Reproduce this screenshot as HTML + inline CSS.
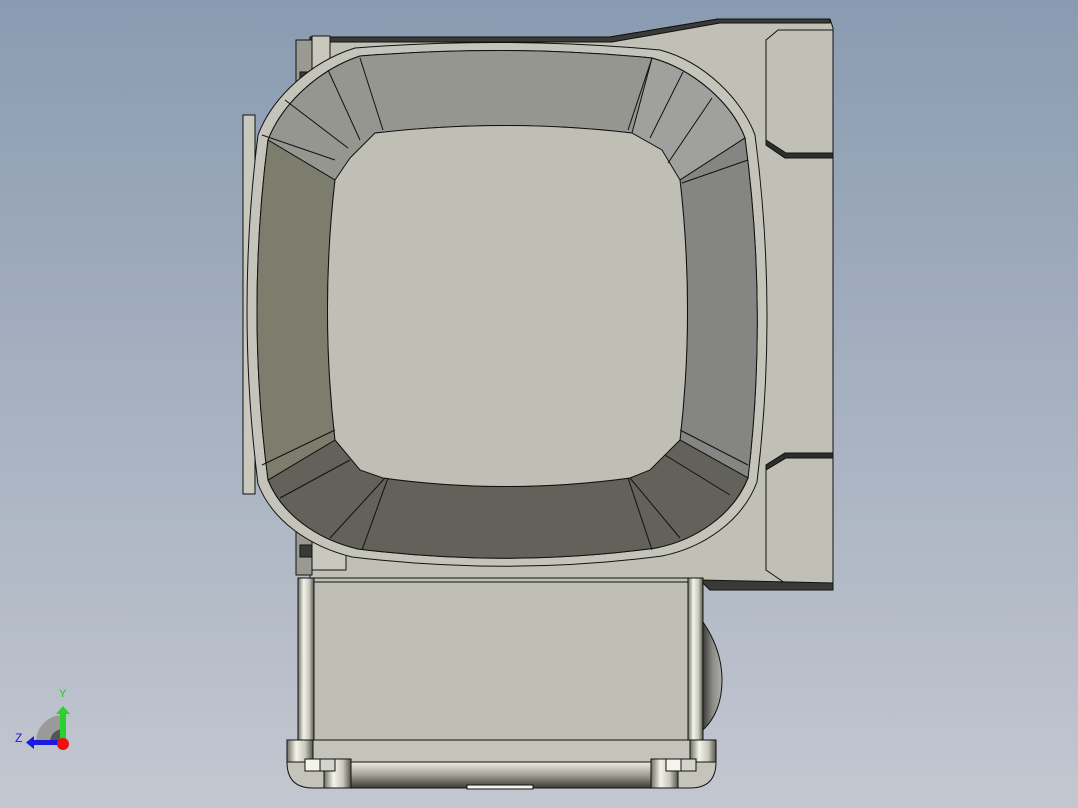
<!DOCTYPE html>
<html><head><style>
html,body{margin:0;padding:0;width:1078px;height:808px;overflow:hidden}
body{background:linear-gradient(#8a9bb1,#c3c7d0)}
svg{position:absolute;left:0;top:0}
</style></head><body>
<svg width="1078" height="808" viewBox="0 0 1078 808" xmlns="http://www.w3.org/2000/svg">
<defs>
<linearGradient id="post" x1="0" x2="1"><stop offset="0" stop-color="#6e6e64"/><stop offset="0.35" stop-color="#f4f4ea"/><stop offset="0.7" stop-color="#c8c8bc"/><stop offset="1" stop-color="#55554c"/></linearGradient>
<linearGradient id="strip" x1="0" y1="0" x2="0" y2="1"><stop offset="0" stop-color="#eeeee4"/><stop offset="0.5" stop-color="#a0a096"/><stop offset="1" stop-color="#3a3a34"/></linearGradient>
<linearGradient id="knob" x1="0" x2="1"><stop offset="0" stop-color="#3a3a36"/><stop offset="0.5" stop-color="#8a8a86"/><stop offset="1" stop-color="#b0b0ac"/></linearGradient>
</defs>
<g stroke="#111" stroke-width="1">
<path d="M310,37 L610,37 L718,19 L830,19 L833,28 L833,590 L710,590 L700,580 L345,580 L310,580 Z" fill="#c0c0b6"/>
<path d="M310,37 L610,37 L718,19 L830,19 L830,23 L720,23 L612,42 L310,42 Z" fill="#3a3a36"/>
<path d="M778,30 L833,30 L833,158 L785,158 L766,145 L766,40 Z" fill="#c0c0b6"/>
<path d="M766,145 L785,158 L833,158 L833,153 L786,153 L766,140Z" fill="#2e2e2a"/>
<path d="M766,465 L785,453 L833,453 L833,583 L785,583 L766,570 Z" fill="#c0c0b6"/>
<path d="M766,465 L785,453 L833,453 L833,458 L786,458 L766,470Z" fill="#2e2e2a"/>
<path d="M700,580 L833,583 L833,590 L710,590 Z" fill="#3a3a36"/>
<rect x="243" y="115" width="12" height="379" fill="#c8c8bd"/>
<rect x="296" y="40" width="16" height="52" fill="#9a9a92"/>
<rect x="300" y="72" width="12" height="12" fill="#3a3a36"/>
<rect x="312" y="36" width="18" height="40" fill="#c8c8be"/>
<rect x="296" y="520" width="16" height="55" fill="#9a9a92"/>
<rect x="300" y="545" width="12" height="12" fill="#3a3a36"/>
<rect x="312" y="540" width="34" height="30" fill="#c8c8be"/>
<!-- outer ring -->
<path d="M355,48 Q510,36 660,50 C705,62 742,100 755,135 Q778,310 757,482 C742,522 702,548 662,556 Q510,576 352,557 C308,546 272,520 258,484 Q236,310 258,135 C272,98 310,62 355,48 Z" fill="#c4c4ba"/>
<path d="M360,56 Q510,44 652,58 C695,70 732,104 745,138 Q768,310 748,478 C733,515 696,540 656,548 Q510,568 358,549 C316,539 282,514 268,480 Q246,310 268,140 C282,104 318,70 360,56 Z" fill="#8a8a80"/>
<path d="M360,56 Q510,44 652,58 C695,70 732,104 745,138 L680,180 L632,133 Q505,118 375,133 L335,180 L268,140 C282,104 318,70 360,56 Z" fill="#959690"/>
<path d="M652,58 C695,70 732,104 745,138 L680,180 L632,133 Z" fill="#a0a09e"/>
<path d="M745,138 Q768,310 748,478 L680,440 Q695,310 680,180 Z" fill="#858583"/>
<path d="M268,480 L335,440 L383,478 Q505,495 630,478 L680,440 L748,478 C733,515 696,540 656,548 Q510,568 358,549 C316,539 282,514 268,480 Z" fill="#62625a"/>
<path d="M268,140 L335,180 Q320,310 335,440 L268,480 Q246,310 268,140 Z" fill="#7d7d6e"/>
<path d="M375,133 Q505,118 632,133 L662,150 L680,180 Q695,310 680,440 L650,470 L630,478 Q505,495 383,478 L360,470 L335,440 Q320,310 335,180 L350,158 Z" fill="#bfbfb6"/>
<g fill="none">
<line x1="328" y1="70" x2="360" y2="140"/><line x1="360" y1="58" x2="383" y2="130"/>
<line x1="652" y1="58" x2="628" y2="130"/><line x1="683" y1="72" x2="650" y2="138"/>
<line x1="712" y1="98" x2="668" y2="163"/><line x1="748" y1="160" x2="682" y2="183"/>
<line x1="262" y1="135" x2="335" y2="160"/><line x1="285" y1="100" x2="348" y2="148"/>
<line x1="262" y1="465" x2="335" y2="430"/><line x1="280" y1="498" x2="350" y2="460"/>
<line x1="330" y1="538" x2="385" y2="478"/><line x1="362" y1="550" x2="388" y2="478"/>
<line x1="680" y1="538" x2="630" y2="478"/><line x1="652" y1="550" x2="628" y2="478"/>
<line x1="748" y1="465" x2="680" y2="430"/><line x1="730" y1="495" x2="665" y2="455"/>
</g>
<rect x="298" y="578" width="405" height="162" fill="#bfbfb6"/>
<rect x="298" y="578" width="16" height="162" fill="url(#post)"/>
<rect x="688" y="578" width="15" height="162" fill="url(#post)"/>
<line x1="314" y1="582" x2="688" y2="582"/>
<path d="M703,622 Q722,650 722,680 Q722,712 703,730 Z" fill="url(#knob)"/>
<path d="M287,740 L716,740 L716,762 Q716,788 690,788 L313,788 Q287,788 287,762 Z" fill="#c4c4ba"/>
<rect x="287" y="740" width="26" height="22" fill="url(#post)"/>
<rect x="690" y="740" width="26" height="22" fill="url(#post)"/>
<line x1="313" y1="762" x2="690" y2="762"/>
<rect x="351" y="762" width="300" height="26" fill="url(#strip)"/>
<rect x="324" y="759" width="27" height="29" fill="url(#post)"/>
<rect x="651" y="759" width="27" height="29" fill="url(#post)"/>
<rect x="305" y="759" width="15" height="12" fill="#f4f4ec"/><rect x="320" y="759" width="15" height="12" fill="#d4d4cc"/>
<rect x="666" y="759" width="15" height="12" fill="#f4f4ec"/><rect x="681" y="759" width="15" height="12" fill="#d4d4cc"/>
<rect x="467" y="785" width="66" height="4" fill="#f4f4ea"/>
</g>
<path d="M36,742 A27,27 0 0 1 63,715 L63,742 Z" fill="#9a9a9a"/>
<path d="M50,742 A13,13 0 0 1 63,729 L63,742 Z" fill="#555"/>
<rect x="60" y="712" width="6" height="28" fill="#2bd02b"/><path d="M56,714 L63,706 L70,714Z" fill="#2bd02b"/>
<rect x="32" y="740" width="28" height="5" fill="#1a1ae0"/><path d="M34,736 L26,742.5 L34,749Z" fill="#1a1ae0"/>
<circle cx="63" cy="744" r="6" fill="#f01010"/>
<text x="59" y="697" font-family="Liberation Sans,sans-serif" font-size="11" fill="#1fc81f">Y</text>
<text x="15" y="742" font-family="Liberation Sans,sans-serif" font-size="12" fill="#1a1ae0">Z</text>
</svg>
</body></html>
